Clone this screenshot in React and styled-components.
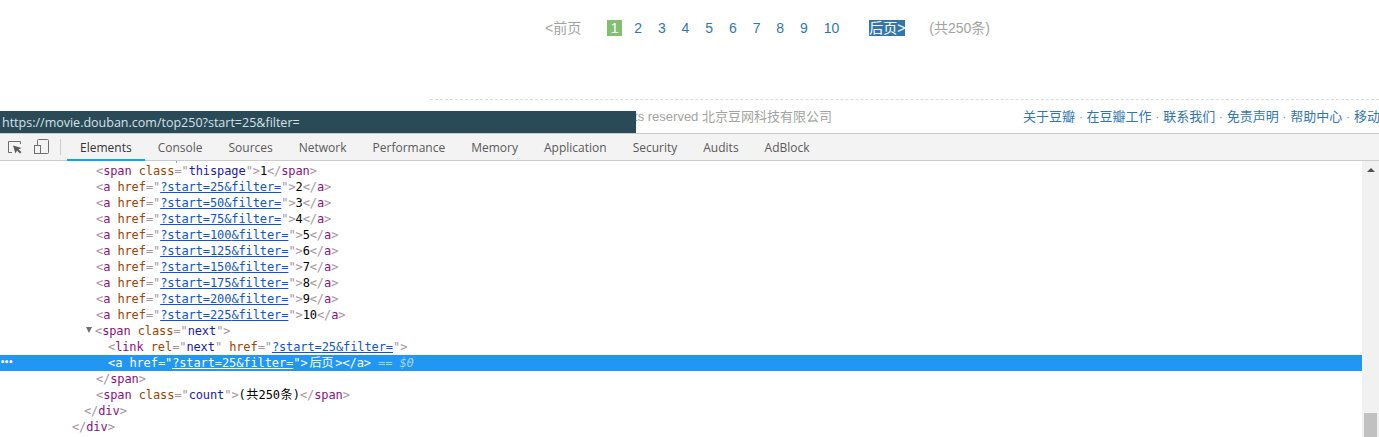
import React from 'react';
import styled, { createGlobalStyle } from 'styled-components';

const Global = createGlobalStyle`
  html, body { margin: 0; padding: 0; background: #fff; overflow: hidden; }
  #root { height: 437px; width: 1379px; overflow: hidden; }
`;
const Screen = styled.div`
  position: relative; width: 1379px; height: 437px; overflow: hidden;
  display: flex; flex-direction: column;
  font-family: "Liberation Sans", "Noto Sans CJK SC", sans-serif;
`;
const Page = styled.div`
  height: 133px; flex: none; overflow: hidden; display: flex; flex-direction: column;
`;
const Pager = styled.div`
  display: flex; align-items: center; height: 16px; margin: 20px 0 0 545px;
  font-size: 14px; line-height: 16px; color: #a3a3a3; white-space: nowrap;
`;
const Prev = styled.span` margin-right: 26px; `;
const Current = styled.span`
  width: 15px; height: 16px; text-align: center; background: #83bf73; color: #fff; margin-right: 12px;
`;
const PageLink = styled.a` color: #37a; margin-right: 15.9px; `;
const Next = styled.a` background: #37a; color: #fff; margin: 0 24px 0 14px; `;
const Footer = styled.div`
  display: flex; align-items: center; margin: 63px 0 0 430px; padding: 9px 0 0 8px;
  border-top: 1px dashed #ddd; font-size: 13px; line-height: 16px; white-space: nowrap;
`;
const Copyright = styled.span` width: 585px; flex: none; color: #a3a3a3; `;
const FooterLinks = styled.span` flex: none; color: #999; `;
const FooterLink = styled.a` color: #37a; `;
const StatusUrl = styled.div`
  position: absolute; left: 0; top: 111px; width: 634px; height: 22px; padding-left: 2px;
  background: #2a4a58; color: #d6e0e5; font: 12.5px/24px "Open Sans", sans-serif; white-space: nowrap;
`;
const Toolbar = styled.div`
  height: 26px; flex: none; display: flex; align-items: stretch; background: #f3f3f3;
  border-top: 1px solid #ccc; border-bottom: 1px solid #ccc;
`;
const ToolIcons = styled.div`
  display: flex; align-items: center; gap: 10px; padding-left: 7px; width: 53px; box-sizing: content-box;
`;
const Divider = styled.div` width: 1px; height: 16px; align-self: center; background: #ccc; margin-right: 6px; `;
const Tab = styled.div`
  padding: 0 13px; font: 12px/28px "Open Sans", sans-serif; color: ${p => p.$active ? '#333' : '#5a5a5a'};
  box-shadow: ${p => p.$active ? 'inset 0 -2px 0 #03a9f4' : 'none'}; height: 27px;
`;
const Body = styled.div` flex: 1; min-height: 0; display: flex; `;
const Tree = styled.div`
  position: relative; flex: 1; padding-top: 2px; overflow: hidden;
  font: 12px/17px "DejaVu Sans Mono", "Noto Sans CJK SC", monospace;
  letter-spacing: -0.1px; color: #000;
  &::before {
    content: ""; position: absolute; left: 176px; top: 0; width: 1px; height: 2px; background: #a79ac4;
  }
`;
const Row = styled.div`
  position: relative; height: 16px; white-space: pre; padding-left: ${p => p.$indent}px;
  background: ${p => p.$selected ? '#2196f3' : 'transparent'};
  ${p => p.$selected ? `
    color: #fff;
    & span, & a { color: #fff; }
  ` : ''}
`;
const Dots = styled.span`
  position: absolute; left: 0; top: 0; font: bold 8px/16px "DejaVu Sans", sans-serif; letter-spacing: -1px; color: #fff;
`;
const Arrow = styled.i`
  display: inline-block; width: 0; height: 0; margin: 0 3px 0 -10px; vertical-align: 2px;
  border-left: 3.5px solid transparent; border-right: 3.5px solid transparent; border-top: 6px solid #6e6e6e;
`;
const Cjk = styled.span` margin: 0 ${p => p.$gap}px; `;
const Br = styled.span` color: #a8949f; `;
const Tag = styled.span` color: #881280; `;
const Attr = styled.span` color: #994500; `;
const Val = styled.span` color: #1a1aa6; `;
const Url = styled.a` color: #15c; text-decoration: underline; `;
const Marker = styled.em` color: rgba(255,255,255,.6); font-style: italic; `;
const Scrollbar = styled.div`
  width: 17px; flex: none; display: flex; flex-direction: column; justify-content: space-between; align-items: center; background: #f1f1f1;
`;
const UpArrow = styled.div`
  width: 0; height: 0; margin-top: 7px;
  border-left: 4px solid transparent; border-right: 4px solid transparent; border-bottom: 4px solid #505050;
`;
const Thumb = styled.div` width: 13px; height: 24px; background: #c1c1c1; `;

const pages = [['25','2'],['50','3'],['75','4'],['100','5'],['125','6'],['150','7'],['175','8'],['200','9'],['225','10']];
const footerLinks = ['关于豆瓣','在豆瓣工作','联系我们','免责声明','帮助中心','移动'];
const tabs = ['Elements','Console','Sources','Network','Performance','Memory','Application','Security','Audits','AdBlock'];

const Open = ({ name, children }) => <><Br>&lt;</Br><Tag>{name}</Tag>{children}<Br>&gt;</Br></>;
const Close = ({ name }) => <><Br>&lt;/</Br><Tag>{name}</Tag><Br>&gt;</Br></>;
const ClassAttr = ({ value }) => <> <Attr>class</Attr><Br>="</Br><Val>{value}</Val><Br>"</Br></>;
const Href = ({ start }) => <> <Attr>href</Attr><Br>="</Br><Url>?start={start}&amp;filter=</Url><Br>"</Br></>;

export default function App() {
  return (
    <Screen>
      <Global />
      <Page>
        <Pager>
          <Prev>&lt;前页</Prev>
          <Current>1</Current>
          {pages.map(([, n]) => <PageLink key={n}>{n}</PageLink>)}
          <Next>后页&gt;</Next>
          <span>(共250条)</span>
        </Pager>
        <Footer>
          <Copyright>© 2005-2019 douban.com, all rights reserved 北京豆网科技有限公司</Copyright>
          <FooterLinks>
            {footerLinks.map((l, i) => <React.Fragment key={l}>{i > 0 && ' · '}<FooterLink>{l}</FooterLink></React.Fragment>)}
          </FooterLinks>
        </Footer>
      </Page>
      <StatusUrl>https://movie.douban.com/top250?start=25&amp;filter=</StatusUrl>
      <Toolbar>
        <ToolIcons>
          <svg width="16" height="16" viewBox="0 0 16 16" fill="none">
            <path d="M5 13.5H1.5V2.5H13.5V5" stroke="#6e6e6e" />
            <path d="M6 6.5L8.5 14.5L10 11.5L13 14.5L14.5 13L11.5 10.5L14.5 9Z" fill="#5a5a5a" />
          </svg>
          <svg width="16" height="16" viewBox="0 0 16 16" fill="none">
            <path d="M4.5 6V1.5a1 1 0 0 1 1-1h9a1 1 0 0 1 1 1v12a1 1 0 0 1-1 1H8" stroke="#6e6e6e" />
            <rect x="1.5" y="6.5" width="6" height="8" stroke="#6e6e6e" />
          </svg>
        </ToolIcons>
        <Divider />
        {tabs.map((t, i) => <Tab key={t} $active={i === 0}>{t}</Tab>)}
      </Toolbar>
      <Body>
        <Tree>
          <Row $indent={96}><Open name="span"><ClassAttr value="thispage" /></Open>1<Close name="span" /></Row>
          {pages.map(([s, n]) => (
            <Row key={n} $indent={96}><Open name="a"><Href start={s} /></Open>{n}<Close name="a" /></Row>
          ))}
          <Row $indent={96}><Arrow /><Open name="span"><ClassAttr value="next" /></Open></Row>
          <Row $indent={108}><Open name="link"> <Attr>rel</Attr><Br>="</Br><Val>next</Val><Br>"</Br><Href start="25" /></Open></Row>
          <Row $indent={108} $selected>
            <Dots>•••</Dots>
            <Open name="a"><Href start="25" /></Open><Cjk $gap={2}>后页</Cjk>&gt;<Close name="a" /> <Marker>== $0</Marker>
          </Row>
          <Row $indent={96}><Close name="span" /></Row>
          <Row $indent={96}><Open name="span"><ClassAttr value="count" /></Open>(<Cjk $gap={0.5}>共</Cjk>250<Cjk $gap={0.5}>条</Cjk>)<Close name="span" /></Row>
          <Row $indent={84}><Close name="div" /></Row>
          <Row $indent={72}><Close name="div" /></Row>
        </Tree>
        <Scrollbar>
          <UpArrow />
          <Thumb />
        </Scrollbar>
      </Body>
    </Screen>
  );
}
